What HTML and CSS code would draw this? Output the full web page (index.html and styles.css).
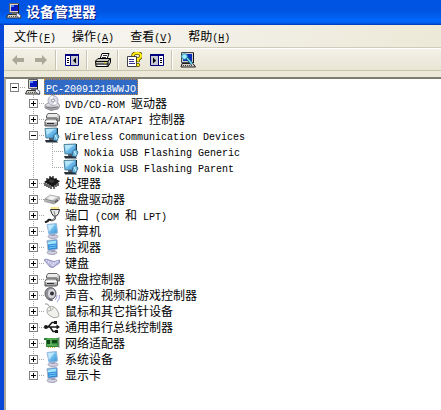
FILE: index.html
```html
<!DOCTYPE html>
<html lang="zh-CN">
<head>
    <meta charset="UTF-8">
    <meta name="viewport" content="width=device-width, initial-scale=1.0">
    <title>设备管理器</title>
    <link rel="stylesheet" href="styles.css">
</head>
<body>
    <!-- shared icons -->
    <svg class="sprite" aria-hidden="true">
        <defs>
            <linearGradient id="screen" x1="0" y1="0" x2="1" y2="1">
                <stop offset="0" stop-color="#b4e8fc"/>
                <stop offset="1" stop-color="#2c90d8"/>
            </linearGradient>
            <linearGradient id="metal" x1="0" y1="0" x2="0" y2="1">
                <stop offset="0" stop-color="#f8f8f8"/>
                <stop offset="1" stop-color="#909098"/>
            </linearGradient>
        </defs>
        <symbol id="i-root" viewBox="0 0 16 16">
            <path d="M3.500.500h9v9h-9z" fill="#d8d4c8" stroke="#606068"/>
            <path d="M5 2h7v6H5z" fill="#0818c0"/>
            <path d="M5 2h3v2H5z" fill="#5888f8"/>
            <path d="M12.500 1v9" stroke="#202020"/>
            <path d="M6 10h5v1H6z" fill="#707070"/>
            <path d="M2 11.500h11l2 3.500H.500z" fill="#d8d4c8" stroke="#303030"/>
            <path d="M3 13.500h7" stroke="#505050" stroke-dasharray="1 1"/>
            <path d="M11 9.500l4 3-1 3-4-3z" fill="#f0f0f0" stroke="#303850" stroke-width=".8"/>
        </symbol>
        <symbol id="i-disc" viewBox="0 0 16 16">
            <path d="M1 10l3-2h10l2 3-2 3-7 1.500-6-2.500z" fill="url(#metal)" stroke="#808088" stroke-width=".8"/>
            <circle cx="9" cy="5.500" r="5" fill="#dcdce8" stroke="#9c9cb0" stroke-width=".8"/>
            <path d="M9 5.500L5.500 2 9 .800zM9 5.500l4 3-3 1.500z" fill="#fff"/>
            <circle cx="9" cy="5.500" r="1.500" fill="#fff" stroke="#787888" stroke-width=".8"/>
            <path d="M2 12l5 1 7-1" fill="none" stroke="#707078"/>
        </symbol>
        <symbol id="i-drives" viewBox="0 0 16 16">
            <path d="M2.500 5L4 2.500h9L15.500 5v5H13V7H2.500z" fill="url(#metal)" stroke="#686868"/>
            <path d="M1 10.500L2.500 8H12l1.500 2.500V14l-1 1H1z" fill="url(#metal)" stroke="#505050"/>
            <path d="M1.500 10.500h11M3.500 5h10" fill="none" stroke="#fff"/>
            <path d="M3 12.500h7" stroke="#303030"/>
        </symbol>
        <symbol id="i-net" viewBox="0 0 16 16">
            <path d="M1 1.500l12-.5v9.500L2 11z" fill="url(#screen)" stroke="#4c8098"/>
            <path d="M2 2l9 0-8 6z" fill="#c4f0fc" opacity=".7"/>
            <path d="M13.500 1v7" stroke="#183848"/>
            <path d="M5 11h5v2H5z" fill="#506070"/>
            <path d="M1 13h11l2 2.500H2z" fill="#283038"/>
            <path d="M10 8l2.500-2L15 9l-2 5-4-1z" fill="#70bce0" stroke="#245c84" stroke-width=".8"/>
            <path d="M11 8l2 4" stroke="#d0f4ff"/>
        </symbol>
        <symbol id="i-chip" viewBox="0 0 16 16">
            <path d="M0 7l7-5 9 4-7 6z" fill="#181818"/>
            <path d="M1 8v3M3 9v3M5 10v3M7 11v3M10 11v3M12 9v3M14 8v3M3 3v2M6 1v2M9 1v2M12 3v2" stroke="#080808" stroke-width="1.200"/>
            <path d="M4 6l3-2 4 2-3 2z" fill="#383838"/>
        </symbol>
        <symbol id="i-disk" viewBox="0 0 16 16">
            <path d="M.500 8L6 4l9.500 2v3L10 13 .500 10.500z" fill="url(#metal)" stroke="#a0a0a0" stroke-width=".8"/>
            <path d="M1 8l9 2.500L15 6.500" fill="none" stroke="#888"/>
            <path d="M3 8l4-2.500 5 1-3.500 2.500z" fill="#f4f4f4"/>
            <path d="M11 10.500l3-2v1.500l-3 2z" fill="#505050"/>
        </symbol>
        <symbol id="i-port" viewBox="0 0 16 16">
            <path d="M7 1h8M8 0v2M11 0v2M14 0v2" stroke="#f0dc60" stroke-width="1.200"/>
            <path d="M6.500 2.500h9l-1 4-2 2.500h-3L7.500 6z" fill="#e8e8e8" stroke="#303030"/>
            <path d="M10 4l1 4" stroke="#888"/>
            <path d="M11 9v2q-1 3-4 2t-3 1l-3 1.500" fill="none" stroke="#202020" stroke-width="2"/>
            <path d="M11 9v2q-1 3-4 2" fill="none" stroke="#e0e0e0" stroke-width=".8"/>
        </symbol>
        <symbol id="i-pc" viewBox="0 0 16 16">
            <ellipse cx="9" cy="13.500" rx="5" ry="2" fill="#d0d0e0" stroke="#9898b0" stroke-width=".8"/>
            <path d="M7 10h4v3H7z" fill="#a0a0b8"/>
            <path d="M3 1.500L12.500.500l1 9.500L5 11.500z" fill="url(#screen)" stroke="#9cb8dc"/>
            <path d="M4 2.500l7-1-6 7z" fill="#d8f4ff" opacity=".7"/>
        </symbol>
        <symbol id="i-monitor" viewBox="0 0 16 16">
            <ellipse cx="8" cy="13.500" rx="5" ry="2" fill="#d0d0e0" stroke="#9898b0" stroke-width=".8"/>
            <path d="M7 10h4v3H7z" fill="#a0a0b8"/>
            <path d="M3 1.500L13 .500l.500 9.500L4 11.500z" fill="#2c88d8" stroke="#a8b4cc"/>
            <path d="M4 2.500l8-1v3l-8 1z" fill="#a0e4fa"/>
            <path d="M5 7l7-1M5 9l7-1" stroke="#70c8f4"/>
        </symbol>
        <symbol id="i-keyboard" viewBox="0 0 16 16">
            <path d="M0 5l2-1 8 2.500L15.500 5v3L9 12.500 6 12z" fill="#b4b4dc" stroke="#8484b4" stroke-width=".8"/>
            <path d="M2 5.500l8 3M4 7.500l6 3M8 10.500l6-4M9 8.500l5-2.500" stroke="#f4f4ff" stroke-dasharray="1 1"/>
        </symbol>
        <symbol id="i-sound" viewBox="0 0 16 16">
            <ellipse cx="6.500" cy="6.500" rx="5.500" ry="6" fill="#909098" stroke="#606068"/>
            <ellipse cx="7.500" cy="6.500" rx="3.500" ry="4.500" fill="#d8d8dc"/>
            <circle cx="8" cy="6.500" r="2" fill="#303038"/>
            <path d="M2 11l4 3h3l-1-2" fill="#686870"/>
            <path d="M11 13q2-2 2-5M13 15q3-3 2.500-7" fill="none" stroke="#a0a0e0"/>
        </symbol>
        <symbol id="i-mouse" viewBox="0 0 16 16">
            <path d="M1 1q3-1 4 2l1 1" fill="none" stroke="#909090"/>
            <path d="M5 4q5-2 8 3t1 7q-4 2-8-1t-3-6q0-2 2-3z" fill="#f0f0ec" stroke="#a8a8a0"/>
            <path d="M4 8q4 1 6-4M7 7L6 4" fill="none" stroke="#b4b4ac"/>
        </symbol>
        <symbol id="i-usb" viewBox="0 0 16 16">
            <path d="M2 8h11M4 8l4-4.500h3M6 8l3 4.500h3" fill="none" stroke="#181818" stroke-width="1.500"/>
            <circle cx="2" cy="8" r="2" fill="#181818"/>
            <path d="M12.500 5.500L16 8l-3.500 2.500zM10 2h3v3h-3zM11 11h3v3h-3z" fill="#181818"/>
        </symbol>
        <symbol id="i-card" viewBox="0 0 16 16">
            <path d="M0 3h15v9H2V5H0z" fill="#30883c"/>
            <path d="M3 5h3v4H3zM8 5h5v3H8z" fill="#104818"/>
            <path d="M3 4h10M7 5v5M3 10h10" stroke="#90dc78" stroke-width=".8"/>
            <path d="M4 12.500h8" stroke="#c8b040" stroke-dasharray="1 1"/>
            <path d="M15 2v11" stroke="#909090"/>
        </symbol>
        <symbol id="i-arrow" viewBox="0 0 16 16">
            <path d="M2 8l5-5v3h7v4H7v3z" fill="#aca899"/>
        </symbol>
        <symbol id="i-pane" viewBox="0 0 16 16">
            <path d="M1.500 2.500h13v11h-13z" fill="#fff" stroke="#000080"/>
            <path d="M1 3h14" stroke="#000080" stroke-width="2"/>
            <path d="M7 4h7v9H7z" fill="#c8c8d0"/>
            <path d="M6.500 4v9" stroke="#000080"/>
            <path d="M3 6.500h2M3 8.500h2M3 10.500h2" stroke="#000"/>
            <path d="M12 5.500v6l-3-3z" fill="#000"/>
        </symbol>
        <symbol id="i-print" viewBox="0 0 16 16">
            <path d="M5 7l2-5.500h7L12 7z" fill="#fff" stroke="#000"/>
            <path d="M8 3.500h4M7 5.500h4" stroke="#000" stroke-width=".8"/>
            <path d="M.500 9L3 6.500h12.500v4L13 14.500H1z" fill="#c8c8c0" stroke="#000"/>
            <path d="M1 9.500h12l2-3M13 9.500v5M1 12h12" fill="none" stroke="#000"/>
            <path d="M9 10.800h2" stroke="#e8d800"/>
            <path d="M3 13.500h8" stroke="#fff"/>
        </symbol>
        <symbol id="i-help" viewBox="0 0 16 16">
            <path d="M1.500 4.500h9v10h-9z" fill="#fff" stroke="#404048"/>
            <path d="M3 7.500h5M3 9.500h5M3 11.500h6" stroke="#000080" stroke-width=".8"/>
            <path d="M7 4q0-3 4-3t4 3q0 2-3 3v3" fill="none" stroke="#504800" stroke-width="3.500"/>
            <path d="M7 4q0-3 4-3t4 3q0 2-3 3v2.500" fill="none" stroke="#ffec18" stroke-width="2"/>
            <circle cx="12" cy="13" r="1.700" fill="#ffec18" stroke="#504800" stroke-width=".8"/>
        </symbol>
        <symbol id="i-scan" viewBox="0 0 16 16">
            <path d="M1.500.500h12v10h-12z" fill="#d4d0c8" stroke="#404850"/>
            <path d="M3 2h9v7H3z" fill="#0830b8"/>
            <path d="M13.500 1v10" stroke="#101018"/>
            <path d="M2 11.500h11l2.500 3.500H1z" fill="#d4d0c8" stroke="#202020"/>
            <path d="M3 13.500h9" stroke="#404040" stroke-dasharray="1 1"/>
            <circle cx="4.500" cy="4.500" r="2.800" fill="#a0ecf8" stroke="#2890b8"/>
            <path d="M7 6l5 6" stroke="#103858" stroke-width="3"/>
            <path d="M7 6l5 6" stroke="#68d8f4" stroke-width="1.800"/>
        </symbol>
    </svg>

    <div class="window">
        <header class="titlebar">
            <svg class="icon"><use href="#i-root"/></svg>
            <h1>设备管理器</h1>
        </header>

        <main>
            <nav class="menubar">
                <button type="button">文件<span class="en">(<u>F</u>)</span></button>
                <button type="button">操作<span class="en">(<u>A</u>)</span></button>
                <button type="button">查看<span class="en">(<u>V</u>)</span></button>
                <button type="button">帮助<span class="en">(<u>H</u>)</span></button>
            </nav>

            <div class="toolbar">
                <button type="button" aria-label="后退"><svg class="icon"><use href="#i-arrow"/></svg></button>
                <button type="button" aria-label="前进"><svg class="icon flip"><use href="#i-arrow"/></svg></button>
                <span class="sep"></span>
                <button type="button" aria-label="显示/隐藏控制台树"><svg class="icon"><use href="#i-pane"/></svg></button>
                <span class="sep"></span>
                <button type="button" aria-label="打印"><svg class="icon"><use href="#i-print"/></svg></button>
                <span class="sep"></span>
                <button type="button" aria-label="帮助"><svg class="icon"><use href="#i-help"/></svg></button>
                <button type="button" aria-label="显示/隐藏操作窗格"><svg class="icon flip"><use href="#i-pane"/></svg></button>
                <span class="sep"></span>
                <button type="button" aria-label="扫描检测硬件改动"><svg class="icon"><use href="#i-scan"/></svg></button>
            </div>

            <div class="tree">
                <div class="row">
                    <button type="button" class="toggle open" aria-label="折叠"></button>
                    <svg class="icon"><use href="#i-root"/></svg>
                    <span class="label selected"><span class="en">PC-20091218WWJO</span></span>
                </div>
                <ul>
                    <li><div class="row"><button type="button" class="toggle" aria-label="展开"></button><svg class="icon"><use href="#i-disc"/></svg><span class="label"><span class="en">DVD/CD-ROM </span>驱动器</span></div></li>
                    <li><div class="row"><button type="button" class="toggle" aria-label="展开"></button><svg class="icon"><use href="#i-drives"/></svg><span class="label"><span class="en">IDE ATA/ATAPI </span>控制器</span></div></li>
                    <li>
                        <div class="row"><button type="button" class="toggle open" aria-label="折叠"></button><svg class="icon"><use href="#i-net"/></svg><span class="label"><span class="en">Wireless Communication Devices</span></span></div>
                        <ul>
                            <li><div class="row leaf"><svg class="icon"><use href="#i-net"/></svg><span class="label"><span class="en">Nokia USB Flashing Generic</span></span></div></li>
                            <li><div class="row leaf"><svg class="icon"><use href="#i-net"/></svg><span class="label"><span class="en">Nokia USB Flashing Parent</span></span></div></li>
                        </ul>
                    </li>
                    <li><div class="row"><button type="button" class="toggle" aria-label="展开"></button><svg class="icon"><use href="#i-chip"/></svg><span class="label">处理器</span></div></li>
                    <li><div class="row"><button type="button" class="toggle" aria-label="展开"></button><svg class="icon"><use href="#i-disk"/></svg><span class="label">磁盘驱动器</span></div></li>
                    <li><div class="row"><button type="button" class="toggle" aria-label="展开"></button><svg class="icon"><use href="#i-port"/></svg><span class="label">端口<span class="en"> (COM </span>和<span class="en"> LPT)</span></span></div></li>
                    <li><div class="row"><button type="button" class="toggle" aria-label="展开"></button><svg class="icon"><use href="#i-pc"/></svg><span class="label">计算机</span></div></li>
                    <li><div class="row"><button type="button" class="toggle" aria-label="展开"></button><svg class="icon"><use href="#i-monitor"/></svg><span class="label">监视器</span></div></li>
                    <li><div class="row"><button type="button" class="toggle" aria-label="展开"></button><svg class="icon"><use href="#i-keyboard"/></svg><span class="label">键盘</span></div></li>
                    <li><div class="row"><button type="button" class="toggle" aria-label="展开"></button><svg class="icon"><use href="#i-drives"/></svg><span class="label">软盘控制器</span></div></li>
                    <li><div class="row"><button type="button" class="toggle" aria-label="展开"></button><svg class="icon"><use href="#i-sound"/></svg><span class="label">声音、视频和游戏控制器</span></div></li>
                    <li><div class="row"><button type="button" class="toggle" aria-label="展开"></button><svg class="icon"><use href="#i-mouse"/></svg><span class="label">鼠标和其它指针设备</span></div></li>
                    <li><div class="row"><button type="button" class="toggle" aria-label="展开"></button><svg class="icon"><use href="#i-usb"/></svg><span class="label">通用串行总线控制器</span></div></li>
                    <li><div class="row"><button type="button" class="toggle" aria-label="展开"></button><svg class="icon"><use href="#i-card"/></svg><span class="label">网络适配器</span></div></li>
                    <li><div class="row"><button type="button" class="toggle" aria-label="展开"></button><svg class="icon"><use href="#i-pc"/></svg><span class="label">系统设备</span></div></li>
                    <li><div class="row"><button type="button" class="toggle" aria-label="展开"></button><svg class="icon"><use href="#i-monitor"/></svg><span class="label">显示卡</span></div></li>
                </ul>
            </div>
        </main>
    </div>
</body>
</html>
```

FILE: styles.css
```css
* {
    box-sizing: border-box;
}

body {
    margin: 0;
    font-family: "Noto Sans CJK SC", sans-serif;
    font-size: 12px;
    line-height: 16px;
    color: #000;
}

button {
    padding: 0;
    border: none;
    background: none;
    font: inherit;
    color: inherit;
}

.sprite {
    position: absolute;
    width: 0;
    height: 0;
}

.icon {
    display: block;
    flex: none;
    width: 16px;
    height: 16px;
}

.flip {
    transform: scaleX(-1);
}

/* latin text sits on a 6px grid, half of a chinese character */
.en {
    font-family: "Liberation Mono", monospace;
    font-size: 10px;
    line-height: 1;
    white-space: pre;
}

.window {
    display: flex;
    flex-direction: column;
    min-height: 100vh;
    background: #ece9d8;
}

.titlebar {
    display: flex;
    align-items: center;
    gap: 4px;
    height: 25px;
    padding: 0 6px 3px;
    background: linear-gradient(#0054e4, #0054e0 45%, #0066fc 80%, #0062f4 90%, #0038b4);
}

.titlebar h1 {
    margin: 0;
    font-size: 14px;
    line-height: 20px;
    color: #fff;
    text-shadow: 1px 1px #0a1883;
}

main {
    display: flex;
    flex: 1;
    flex-direction: column;
    border-left: 4px solid #0848d8;
}

.menubar {
    display: flex;
    gap: 16px;
    height: 23px;
    padding: 0 10px;
    border-bottom: 1px solid #d0ccbc;
    background: linear-gradient(90deg, #f8f7f4, #ece9d8);
}

.toolbar {
    display: flex;
    align-items: center;
    height: 23px;
    padding: 0 2px;
    border-top: 1px solid #fff;
    border-bottom: 1px solid #c8c4b0;
    background: linear-gradient(#f3f1e8, #e9e6d4);
}

.toolbar button {
    display: flex;
    justify-content: center;
    width: 23px;
}

.sep {
    width: 2px;
    height: 20px;
    margin: 0 3px;
    border-left: 1px solid #c8c4b4;
    border-right: 1px solid #fff;
}

.tree {
    flex: 1;
    margin-top: 6px;
    padding-left: 4px;
    border-top: 2px solid #807c70;
    border-left: 2px solid #aca899;
    background: #fff;
}

.tree ul {
    margin: 0;
    padding-left: 19px;
    list-style: none;
}

/* dotted connector running down the left of each item */
.tree li {
    background: repeating-linear-gradient(#a8a8a8 0 1px, transparent 1px 2px) 4px 0 / 1px 100% no-repeat;
}

.tree li:last-child {
    background-size: 1px 8px;
}

.row {
    display: flex;
    align-items: center;
    height: 16px;
    background: repeating-linear-gradient(90deg, #a8a8a8 0 1px, transparent 1px 2px) 4px 8px / 11px 1px no-repeat;
}

.leaf {
    padding-left: 15px;
}

.toggle {
    flex: none;
    width: 9px;
    height: 9px;
    margin-right: 6px;
    border: 1px solid #808080;
    background:
        linear-gradient(#000, #000) center / 5px 1px no-repeat,
        linear-gradient(#000, #000) center / 1px 5px no-repeat,
        #fff;
}

.toggle.open {
    background: linear-gradient(#000, #000) center / 5px 1px no-repeat, #fff;
}

.label {
    height: 16px;
    margin-left: 3px;
    padding: 0 2px;
    white-space: nowrap;
}

.selected {
    background: #316ac5;
    color: #fff;
    outline: 1px dotted #c08838;
    outline-offset: -1px;
}
```
